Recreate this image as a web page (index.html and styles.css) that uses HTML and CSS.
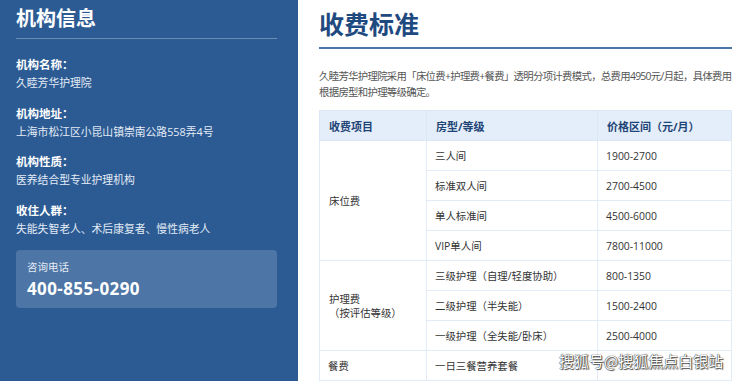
FILE: index.html
```html
<!DOCTYPE html>
<html lang="zh-CN">
<head>
<meta charset="utf-8">
<title>收费标准</title>
<link rel="stylesheet" href="styles.css">
</head>
<body>
<div class="page">
  <aside class="side">
    <h2 class="side-title">机构信息</h2>
    <div class="info">
      <div class="info-label">机构名称：</div>
      <div class="info-value">久睦芳华护理院</div>
    </div>
    <div class="info">
      <div class="info-label">机构地址：</div>
      <div class="info-value">上海市松江区小昆山镇崇南公路558弄4号</div>
    </div>
    <div class="info">
      <div class="info-label">机构性质：</div>
      <div class="info-value">医养结合型专业护理机构</div>
    </div>
    <div class="info">
      <div class="info-label">收住人群：</div>
      <div class="info-value">失能失智老人、术后康复者、慢性病老人</div>
    </div>
    <div class="phone-box">
      <div class="phone-label">咨询电话</div>
      <div class="phone-num">400-855-0290</div>
    </div>
  </aside>
  <main class="main">
    <h1 class="main-title">收费标准</h1>
    <p class="intro">久睦芳华护理院采用「床位费+护理费+餐费」透明分项计费模式，总费用4950元/月起，具体费用根据房型和护理等级确定。</p>
    <table class="fees">
      <thead>
        <tr><th class="c1">收费项目</th><th class="c2">房型/等级</th><th class="c3">价格区间（元/月）</th></tr>
      </thead>
      <tbody>
        <tr><td rowspan="4">床位费</td><td>三人间</td><td>1900-2700</td></tr>
        <tr><td>标准双人间</td><td>2700-4500</td></tr>
        <tr><td>单人标准间</td><td>4500-6000</td></tr>
        <tr><td>VIP单人间</td><td>7800-11000</td></tr>
        <tr><td rowspan="3">护理费<br>（按评估等级）</td><td>三级护理（自理/轻度协助）</td><td>800-1350</td></tr>
        <tr><td>二级护理（半失能）</td><td>1500-2400</td></tr>
        <tr><td>一级护理（全失能/卧床）</td><td>2500-4000</td></tr>
        <tr><td>餐费</td><td>一日三餐营养套餐</td><td></td></tr>
      </tbody>
    </table>
  </main>
  <div class="watermark">搜狐号@搜狐焦点白银站</div>
</div>
</body>
</html>
```

FILE: styles.css
```css
html, body {
  margin: 0;
  padding: 0;
  background: #ffffff;
}
body {
  font-family: "Open Sans", "Noto Sans CJK SC", sans-serif;
  width: 740px;
  height: 381px;
  overflow: hidden;
}
.page {
  position: relative;
  display: flex;
  height: 381px;
  overflow: hidden;
}
.side {
  width: 298px;
  flex: none;
  box-sizing: border-box;
  background: #2c5b94;
  color: #ffffff;
  padding: 5px 21px 0 16px;
}
.side-title {
  margin: 0 0 17px;
  font-size: 20px;
  line-height: 28px;
  font-weight: 700;
  padding-bottom: 5px;
  border-bottom: 1px solid rgba(255, 255, 255, 0.3);
}
.info {
  margin-bottom: 12.5px;
}
.info-label {
  font-size: 11.5px;
  line-height: 18px;
  font-weight: 700;
}
.info-value {
  font-size: 10.8px;
  line-height: 18px;
  color: #e3ebf5;
}
.phone-box {
  margin-top: 10px;
  background: rgba(255, 255, 255, 0.16);
  border-radius: 4px;
  padding: 9px 11px 8px;
}
.phone-label {
  font-size: 10.5px;
  line-height: 16px;
  color: #e3ebf5;
}
.phone-num {
  margin-top: 3px;
  font-size: 17px;
  line-height: 22px;
  font-weight: 700;
  letter-spacing: 0.4px;
}
.main {
  flex: 1;
  min-width: 0;
  padding: 7px 8px 0 21px;
}
.main-title {
  margin: 0;
  font-size: 25px;
  line-height: 34px;
  font-weight: 700;
  color: #1e4a80;
  padding-bottom: 6px;
  border-bottom: 2px solid #4a74aa;
}
.intro {
  margin: 19px 0 10px;
  font-size: 10.4px;
  line-height: 16px;
  letter-spacing: -0.7px;
  color: #555555;
}
.fees {
  width: 100%;
  border-collapse: collapse;
  table-layout: fixed;
  font-size: 10.4px;
  color: #333333;
}
.fees th,
.fees td {
  box-sizing: border-box;
}
.fees .c1 { width: 107px; }
.fees .c2 { width: 171px; }
.fees th {
  background: #e4eefa;
  color: #1f4476;
  font-weight: 700;
  font-size: 11px;
  text-align: left;
  height: 30px;
  padding: 0 0 0 9px;
  border: 1px solid #dbe7f4;
}
.fees td {
  height: 30px;
  padding: 0 0 0 8px;
  border: 1px solid #e2ecf7;
  line-height: 14px;
}
.fees td[rowspan] {
  padding-left: 9px;
}
.watermark {
  position: absolute;
  left: 559px;
  top: 350px;
  font-family: "Noto Sans CJK SC", sans-serif;
  font-size: 15px;
  line-height: 22px;
  color: #ffffff;
  text-shadow: 0 0 1px #333, 0 0 1px #333, 1px 1px 1px #555;
  white-space: nowrap;
}
```
